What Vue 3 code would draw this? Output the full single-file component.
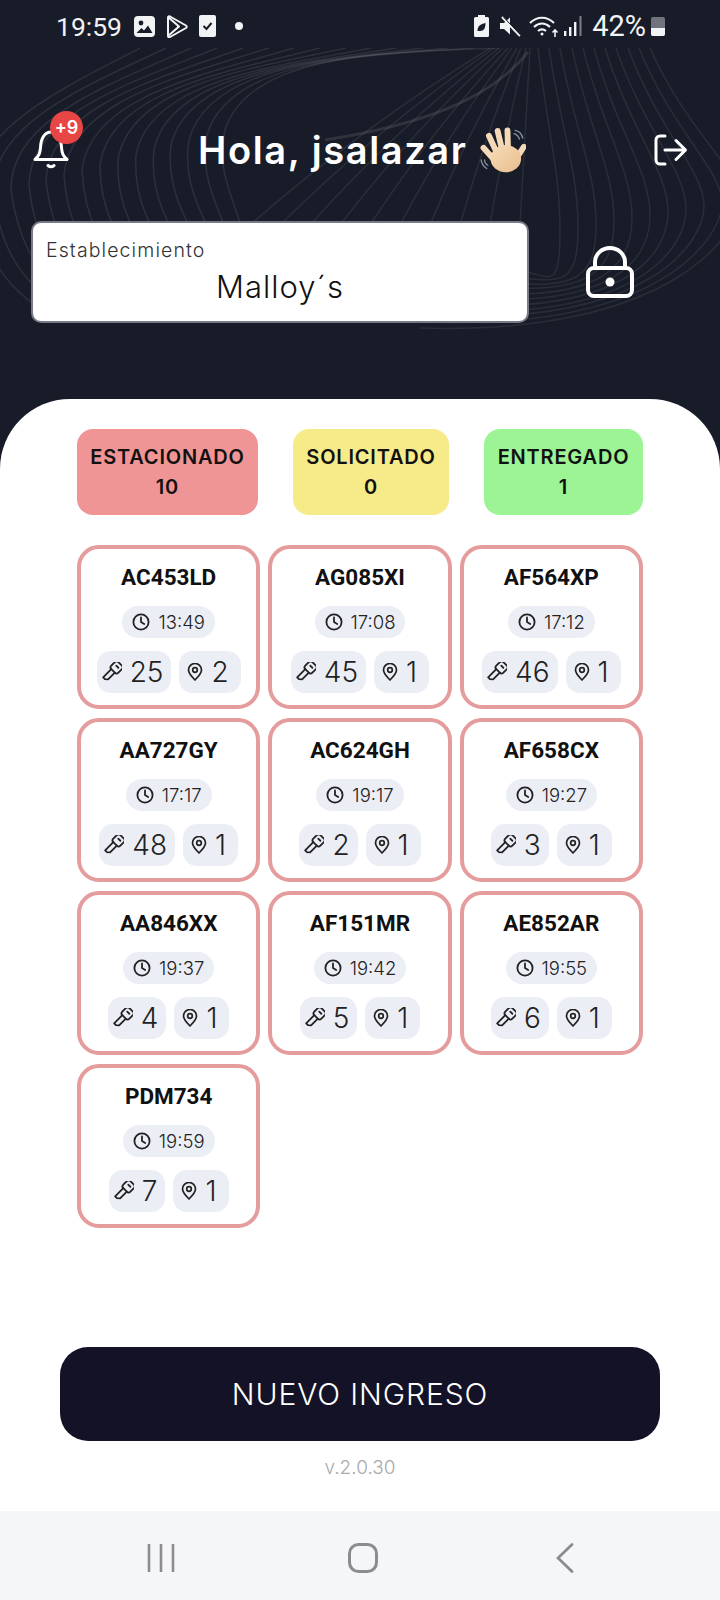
<template>
  <div class="screen">
    <!-- Status bar -->
    <div class="status-bar">
      <span class="clock">19:59</span>
      <svg class="st-icon" width="21" height="21" viewBox="0 0 21 21">
        <rect x="0" y="0" width="21" height="21" rx="4" fill="#f2f3f5" />
        <circle cx="7" cy="7" r="2.4" fill="#181c28" />
        <path d="M2.5 17l5-5 2.5 2.5 4-5 4.5 7.500z" fill="#181c28" />
      </svg>
      <svg class="st-icon" width="22" height="23" viewBox="0 0 22 23" fill="none" stroke="#f2f3f5" stroke-width="2" stroke-linejoin="round">
        <path d="M2 2.500c0-1 1-1.500 2-1l16 9c1 .6 1 1.900 0 2.500l-16 9c-1 .5-2 0-2-1z" />
        <path d="M2 2l11 9.500L2 21M13 11.500l-2 0" />
      </svg>
      <svg class="st-icon" width="17" height="22" viewBox="0 0 17 22">
        <rect x="0" y="0" width="17" height="22" rx="2" fill="#f2f3f5" />
        <path d="M4.500 11l3 3 5-6" fill="none" stroke="#181c28" stroke-width="2" />
      </svg>
      <span class="st-dot"></span>
      <span class="st-spacer"></span>
      <svg class="st-icon" width="15" height="22" viewBox="0 0 15 22">
        <path d="M4 0h7v2h2.500a1.500 1.500 0 0 1 1.500 1.500V20.500a1.500 1.500 0 0 1-1.500 1.500H1.500A1.500 1.500 0 0 1 0 20.500V3.500A1.500 1.500 0 0 1 1.500 2H4z" fill="#f2f3f5" />
        <path d="M3.500 16c0-5 3-7 8-8 0 5-1.500 8-5.500 8-.8 0-1.700 0-2.500 0z" fill="#181c28" />
      </svg>
      <svg class="st-icon mute" width="21" height="21" viewBox="0 0 21 21">
        <path d="M0 7h4l6-5.500v17L4 13H0z" fill="#f2f3f5" />
        <path d="M2 1l18 19" stroke="#f2f3f5" stroke-width="2.200" />
        <path d="M3.500 1l18 19" stroke="#181c28" stroke-width="1" />
      </svg>
      <svg class="st-icon wifi" width="30" height="23" viewBox="0 0 30 23" fill="none" stroke="#f2f3f5" stroke-width="2.200">
        <path d="M1 8c7-7 17-7 24 0M5 12c5-4.500 11-4.500 16 0M9 16c3-2.500 5-2.500 8 0" />
        <circle cx="13" cy="19" r="1.500" fill="#f2f3f5" stroke="none" />
        <path d="M26 22v-7M23.500 17.500l2.500-2.500 2.500 2.500" stroke-width="1.600" />
      </svg>
      <svg class="st-icon" width="18" height="20" viewBox="0 0 18 20" fill="#f2f3f5">
        <rect x="0" y="15" width="2.400" height="5" />
        <rect x="5" y="11" width="2.400" height="9" />
        <rect x="10" y="6" width="2.400" height="14" />
        <rect x="15.500" y="0" width="2" height="20" fill="#7d808a" />
      </svg>
      <span class="battery-text">42%</span>
      <span class="battery"><span class="battery-fill"></span></span>
    </div>

    <!-- Dark header -->
    <header class="top">
      <svg class="contours" width="720" height="292" viewBox="0 48 720 292" fill="none">
        <path v-for="(d, i) in contourPaths" :key="'c' + i" :d="d" stroke="#ffffff" stroke-opacity="0.09" stroke-width="1.500" />
        <path v-for="(d, i) in fanPaths" :key="'f' + i" :d="d" stroke="#ffffff" stroke-opacity="0.08" stroke-width="1.500" />
        <path d="M528 52C490 100 420 125 325 140" stroke="#ffffff" stroke-opacity="0.1" stroke-width="3" />
      </svg>

      <div class="top-row">
        <div class="bell">
          <svg width="36" height="40" viewBox="0 0 36 40" fill="none" stroke="#fff" stroke-width="3" stroke-linecap="round" stroke-linejoin="round">
            <path d="M2 29.500c4-3.500 5-6 5.500-12C8 8 12 2 18 2c6 0 10 6 10.500 15.500.5 6 1.500 8.500 5.500 12z" />
            <path d="M15 35.500c2 1.700 4 1.700 6 0" />
          </svg>
          <span class="badge">+9</span>
        </div>
        <h1 class="hello">Hola, jsalazar</h1>
        <svg class="wave" width="48" height="46" viewBox="17 0 44 42">
          <defs>
            <linearGradient id="skin" x1="0" y1="0" x2="1" y2="1">
              <stop offset="0" stop-color="#f7dcb9" />
              <stop offset="1" stop-color="#e9bd8d" />
            </linearGradient>
          </defs>
          <g fill="none" stroke="#8a93a5" stroke-width="1.200" stroke-linecap="round">
            <path d="M51 3c3 .5 6 3 7 7M50 6c2 .5 4 2 5 5" />
            <path d="M20 30c0 3 2 6 5 8M23 30c0 2 1 4 3 5" />
          </g>
          <g fill="none" stroke="#f5d9b6" stroke-width="5.400" stroke-linecap="round">
            <path d="M22 19l9 10M27 8l7 15M35 3.500l4 17M44 3l.5 17M59 18l-7 11" />
          </g>
          <ellipse cx="42.500" cy="29" rx="14" ry="12.500" fill="url(#skin)" />
        </svg>
        <svg class="logout" width="34" height="32" viewBox="0 0 34 32" fill="none" stroke="#fff" stroke-width="3" stroke-linecap="round" stroke-linejoin="round">
          <path d="M11 2H6a4 4 0 0 0-4 4v20a4 4 0 0 0 4 4h5" />
          <path d="M11 16h20M22 6.500L31.500 16 22 25.500" />
        </svg>
      </div>

      <div class="place-row">
        <div class="place">
          <span class="place-label">Establecimiento</span>
          <span class="place-value">Malloy´s</span>
        </div>
        <svg class="lock" width="48" height="52" viewBox="0 0 48 52" fill="none" stroke="#fff" stroke-width="4" stroke-linecap="round">
          <rect x="2" y="22" width="44" height="28" rx="6" />
          <path d="M9 22v-6a15 14 0 0 1 30 0v6" />
          <circle cx="24" cy="36" r="4.500" fill="#fff" stroke="none" />
        </svg>
      </div>
    </header>

    <!-- White sheet -->
    <main class="sheet">
      <div class="stats">
        <div v-for="s in stats" :key="s.label" class="stat" :class="s.cls">
          <span>{{ s.label }}</span>
          <span>{{ s.value }}</span>
        </div>
      </div>

      <div class="grid">
        <div v-for="car in cars" :key="car.plate" class="card">
          <div class="plate">{{ car.plate }}</div>
          <div class="time-pill">
            <svg width="18" height="18" viewBox="0 0 18 18" fill="none" stroke="#222" stroke-width="1.800" stroke-linecap="round" stroke-linejoin="round">
              <circle cx="9" cy="9" r="7.600" />
              <path d="M9 4.500V9l3.200 2" />
            </svg>
            <span>{{ car.time }}</span>
          </div>
          <div class="pills">
            <div class="pill key">
              <svg width="20" height="20" viewBox="0 0 20 20" fill="none" stroke="#222" stroke-width="1.800" stroke-linejoin="round" stroke-linecap="round">
                <g transform="rotate(45 10 10)">
                  <rect x="5" y="-1.500" width="10" height="10" rx="2.500" />
                  <path d="M7.500 8.500V20h2.500l2.500-2v-9.500" />
                  <path d="M8.500 2.500h3" />
                </g>
              </svg>
              <span>{{ car.key }}</span>
            </div>
            <div class="pill spot">
              <svg width="16" height="18" viewBox="0 0 16 18" fill="none" stroke="#222" stroke-width="1.700" stroke-linejoin="round">
                <path d="M8 17C4 13 1.500 10.500 1.500 7a6.500 6.500 0 0 1 13 0c0 3.500-2.500 6-6.500 10z" />
                <circle cx="8" cy="7" r="2.300" />
              </svg>
              <span>{{ car.spot }}</span>
            </div>
          </div>
        </div>
      </div>

      <button class="new-btn" type="button">NUEVO INGRESO</button>
      <div class="version">v.2.0.30</div>
    </main>

    <!-- Android nav -->
    <nav class="nav-bar">
      <svg width="28" height="30" viewBox="0 0 28 30" stroke="#8c8c8f" stroke-width="2.600">
        <path d="M2 1v28M14 1v28M26 1v28" />
      </svg>
      <svg width="30" height="30" viewBox="0 0 30 30" fill="none" stroke="#8c8c8f" stroke-width="3">
        <rect x="1.500" y="1.500" width="27" height="27" rx="9" />
      </svg>
      <svg width="18" height="30" viewBox="0 0 18 30" fill="none" stroke="#8c8c8f" stroke-width="2.800" stroke-linecap="round">
        <path d="M16 1.500L2 15l14 13.500" />
      </svg>
    </nav>
  </div>
</template>

<script setup>
const stats = [
  { label: 'ESTACIONADO', value: 10, cls: 'red' },
  { label: 'SOLICITADO', value: 0, cls: 'yellow' },
  { label: 'ENTREGADO', value: 1, cls: 'green' }
]

const cars = [
  { plate: 'AC453LD', time: '13:49', key: 25, spot: 2 },
  { plate: 'AG085XI', time: '17:08', key: 45, spot: 1 },
  { plate: 'AF564XP', time: '17:12', key: 46, spot: 1 },
  { plate: 'AA727GY', time: '17:17', key: 48, spot: 1 },
  { plate: 'AC624GH', time: '19:17', key: 2, spot: 1 },
  { plate: 'AF658CX', time: '19:27', key: 3, spot: 1 },
  { plate: 'AA846XX', time: '19:37', key: 4, spot: 1 },
  { plate: 'AF151MR', time: '19:42', key: 5, spot: 1 },
  { plate: 'AE852AR', time: '19:55', key: 6, spot: 1 },
  { plate: 'PDM734', time: '19:59', key: 7, spot: 1 }
]

const lerp = (a, b, t) => Math.round(a + (b - a) * t)

// background topographic lines, interpolated between an inner and an outer shape
const contourPaths = Array.from({ length: 15 }, (_, i) => {
  const t = i / 14
  const p = (x0, y0, x1, y1) => `${lerp(x0, x1, t)} ${lerp(y0, y1, t)}`
  return (
    `M${p(500, 48, 140, 48)} ` +
    `C${p(400, 52, 60, 90)} ${p(250, 50, -30, 130)} ${p(225, 130, -25, 200)} ` +
    `C${p(215, 170, -15, 250)} ${p(235, 200, 0, 290)} ${p(245, 240, 60, 320)}`
  )
})

// lines leaving the top right corner: the right ones bend back under the input, the left ones run into it
const fanPaths = [
  ...Array.from({ length: 11 }, (_, i) => {
    const t = i / 10
    const sx = lerp(538, 650, t)
    const ex = lerp(560, 740, t)
    const ey = lerp(230, 200, t)
    const bx = lerp(520, 420, t)
    const by = lerp(270, 328, t)
    return `M${sx} 48C${lerp(sx, ex, 0.4)} 130 ${ex} 170 ${ex} ${ey}S${lerp(ex, bx, 0.2)} ${by + 8} ${bx} ${by}`
  }),
  ...Array.from({ length: 10 }, (_, i) => {
    const t = i / 9
    const sx = lerp(530, 490, t)
    const ex = lerp(520, 250, t)
    return `M${sx} 48Q${lerp(sx, ex, 0.55)} 130 ${ex} 225`
  })
]
</script>

<style>
html, body {
  margin: 0;
  padding: 0;
}
</style>

<style scoped>
.screen {
  width: 720px;
  height: 1600px;
  display: flex;
  flex-direction: column;
  background: #181c28;
  font-family: Inter, "Noto Sans", sans-serif;
  overflow: hidden;
}

/* Status bar */
.status-bar {
  height: 48px;
  display: flex;
  align-items: center;
  padding: 4px 55px 0 56px;
  box-sizing: border-box;
  color: #f2f3f5;
  font-family: Roboto, sans-serif;
}

.clock {
  font-size: 26.500px;
  margin-right: 12px;
}

.st-icon {
  margin-right: 11px;
  flex: none;
}

.st-dot {
  width: 8px;
  height: 8px;
  border-radius: 50%;
  background: #f2f3f5;
  margin-left: 8px;
}

.st-spacer {
  flex: 1;
}

.mute {
  margin-right: 8px;
}

.wifi {
  margin-right: 5px;
}

.battery-text {
  font-size: 29px;
  margin-left: -1px;
  margin-right: 5px;
}

.battery {
  width: 14px;
  height: 19px;
  background: #70737c;
  border-radius: 2px;
  display: flex;
  align-items: flex-end;
  overflow: hidden;
}

.battery-fill {
  width: 100%;
  height: 8px;
  background: #f2f3f5;
}

/* Header */
.top {
  position: relative;
  height: 351px;
  flex: none;
  padding: 77px 32px 0 31px;
  box-sizing: border-box;
}

.contours {
  position: absolute;
  left: 0;
  top: 0;
}

.top-row {
  position: relative;
  display: flex;
  align-items: center;
  height: 50px;
}

.bell {
  position: relative;
  width: 36px;
  height: 40px;
  margin-left: 2px;
  margin-right: 129px;
}

.bell svg {
  display: block;
}

.badge {
  position: absolute;
  left: 17px;
  top: -19px;
  width: 33px;
  height: 33px;
  border-radius: 50%;
  background: #e84545;
  color: #fff;
  font-size: 18px;
  font-weight: 600;
  line-height: 33px;
  text-align: center;
}

.hello {
  margin: 0;
  color: #fff;
  font-size: 38px;
  font-weight: 600;
  letter-spacing: 1.600px;
  white-space: nowrap;
}

.wave {
  margin-left: 11px;
  flex: none;
}

.logout {
  margin-left: auto;
  flex: none;
}

.place-row {
  position: relative;
  display: flex;
  align-items: center;
  margin-top: 46px;
}

.place {
  width: 498px;
  height: 102px;
  box-sizing: border-box;
  background: #fff;
  border: 2px solid #777b88;
  border-radius: 10px;
  padding: 15px 13px 0;
  display: flex;
  flex-direction: column;
}

.place-label {
  font-size: 19.500px;
  font-weight: 300;
  letter-spacing: 1.100px;
  color: #333;
}

.place-value {
  font-size: 31px;
  font-weight: 300;
  letter-spacing: 1px;
  color: #111;
  text-align: center;
  margin-top: 6px;
}

.lock {
  margin-left: 57px;
  flex: none;
}

/* Sheet */
.sheet {
  flex: 1;
  background: #fff;
  border-radius: 70px 70px 0 0;
  padding: 30px 77px 0;
  display: flex;
  flex-direction: column;
  position: relative;
}

.stats {
  display: flex;
  justify-content: space-between;
}

.stat {
  height: 86px;
  border-radius: 16px;
  display: flex;
  flex-direction: column;
  align-items: center;
  justify-content: center;
  gap: 6px;
  color: #111;
  font-size: 20px;
  font-weight: 600;
  letter-spacing: 0.8px;
  line-height: 24px;
}

.stat.red {
  width: 181px;
  background: #f09595;
}

.stat.yellow {
  width: 156px;
  background: #f7ea88;
}

.stat.green {
  width: 159px;
  background: #9cf494;
}

.grid {
  display: grid;
  grid-template-columns: repeat(3, 1fr);
  gap: 9px 8px;
  margin-top: 30px;
}

.card {
  height: 164px;
  box-sizing: border-box;
  border: 4px solid #e59c9c;
  border-radius: 22px;
  display: flex;
  flex-direction: column;
  align-items: center;
  padding-top: 15px;
}

.plate {
  font-family: Roboto, sans-serif;
  font-size: 22.500px;
  font-weight: 700;
  color: #111;
  line-height: 26px;
}

.time-pill {
  height: 32px;
  margin-top: 16px;
  padding: 0 10px;
  display: flex;
  align-items: center;
  gap: 8px;
  background: #eceef5;
  border-radius: 16px;
  font-size: 18.500px;
  font-weight: 300;
  color: #222;
}

.pills {
  display: flex;
  gap: 8px;
  margin-top: 13px;
}

.pill {
  height: 42px;
  display: flex;
  align-items: center;
  gap: 8px;
  background: #eceef5;
  border-radius: 14px;
  font-size: 28px;
  font-weight: 300;
  color: #222;
}

.pill.key {
  padding: 0 8px 0 5px;
}

.pill.spot {
  padding: 0 12px 0 8px;
}

.new-btn {
  width: 600px;
  height: 94px;
  margin: auto 0 0 -17px;
  border: none;
  border-radius: 28px;
  background: #141226;
  color: #fff;
  font-family: inherit;
  font-size: 30px;
  font-weight: 300;
  letter-spacing: 0.9px;
}

.version {
  text-align: center;
  color: #aaaaaa;
  font-size: 19px;
  font-weight: 300;
  line-height: 24px;
  margin: 15px 0 31px;
}

.nav-bar {
  height: 89px;
  flex: none;
  background: #f5f6f8;
  display: flex;
  align-items: flex-start;
  padding-top: 32px;
  box-sizing: border-box;
  position: relative;
}

.nav-bar svg:nth-child(1) {
  margin-left: 147px;
}

.nav-bar svg:nth-child(2) {
  margin-left: 173px;
}

.nav-bar svg:nth-child(3) {
  margin-left: 178px;
}
</style>
